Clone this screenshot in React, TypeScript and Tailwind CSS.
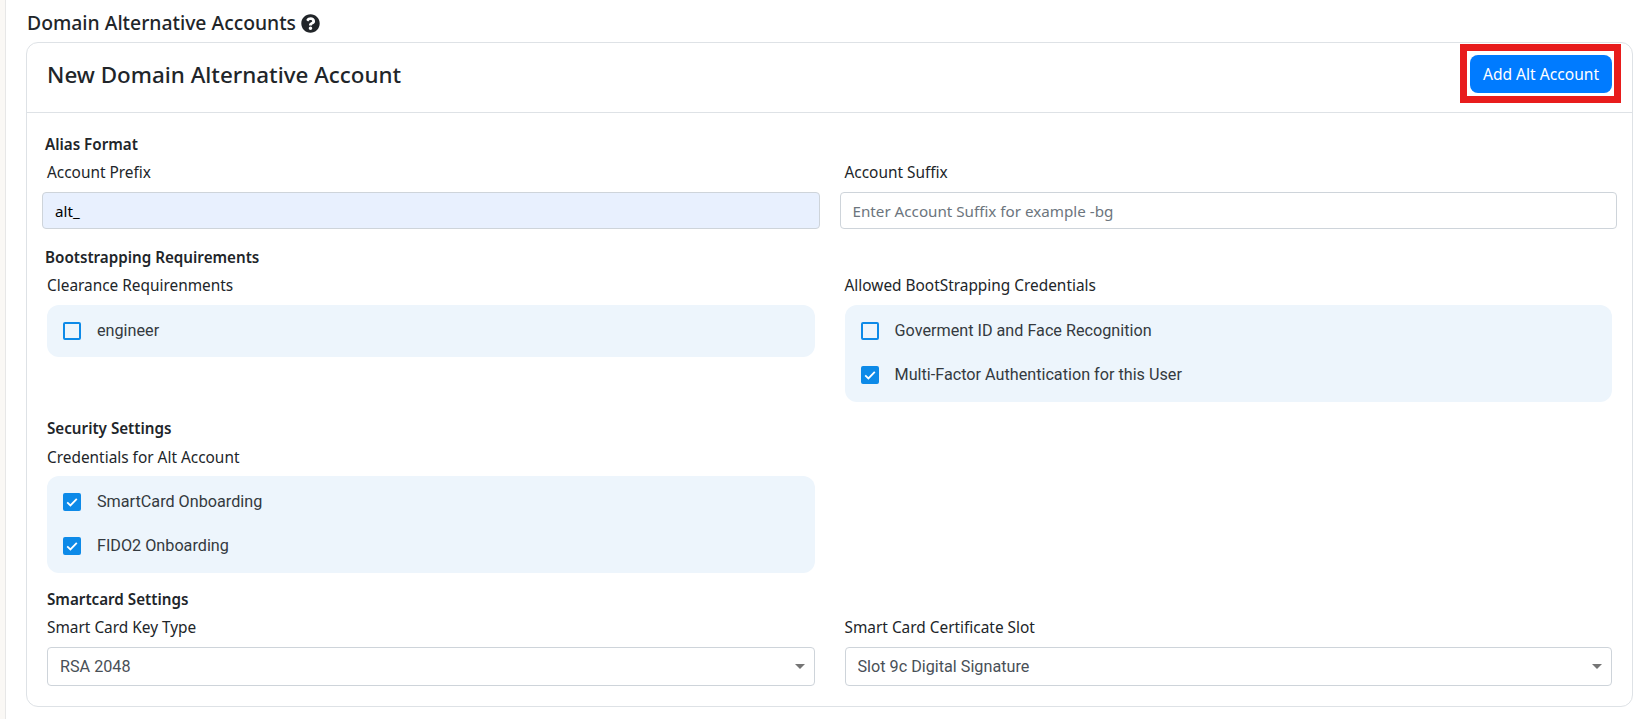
import React from 'react';
import { FaQuestionCircle } from 'react-icons/fa';

const Check = ({ checked }: { checked?: boolean }) => (
  <span
    className={
      'flex h-[18px] w-[18px] shrink-0 items-center justify-center rounded-[2px] border-2 border-[#0d8ae8] ' +
      (checked ? 'bg-[#0d8ae8]' : 'bg-transparent')
    }
  >
    {checked && (
      <svg width="14" height="14" viewBox="0 0 14 14" fill="none">
        <path d="M2.2 7.4 5.4 10.4 11.8 3.8" stroke="#fff" strokeWidth="1.8" />
      </svg>
    )}
  </span>
);

const CheckRow = ({ label, checked }: { label: string; checked?: boolean }) => (
  <div className="flex h-[18px] items-center gap-[16px]">
    <Check checked={checked} />
    <span className="font-['Roboto',sans-serif] text-[16.2px] text-[#343a40]">{label}</span>
  </div>
);

const CheckBox = ({ items }: { items: { label: string; checked?: boolean }[] }) => (
  <div className="flex flex-col gap-[26px] rounded-[12px] bg-[#edf5fc] px-[16px] pb-[17px] pt-[17px] [&:has(>:nth-child(2))]:pb-[18px]">
    {items.map((i) => (
      <CheckRow key={i.label} label={i.label} checked={i.checked} />
    ))}
  </div>
);

const SectionTitle = ({ children, className = '' }: { children: React.ReactNode; className?: string }) => (
  <div className={'h-5 text-[15.2px] leading-5 font-semibold text-[#212529] ' + className}>{children}</div>
);

const Label = ({ children, className = '' }: { children: React.ReactNode; className?: string }) => (
  <div className={'h-5 pt-px text-[15.4px] leading-5 text-[#212529] ' + className}>{children}</div>
);

const Select = ({ value }: { value: string }) => (
  <div className="relative mt-[10px] h-[39px]">
    <select
      defaultValue={value}
      className="h-full w-full appearance-none rounded-[4px] border border-[#ced4da] bg-white pl-[12px] pt-[2px] font-['Roboto',sans-serif] text-[16.2px] text-[#495057]"
    >
      <option>{value}</option>
    </select>
    <span className="pointer-events-none absolute right-[10px] top-[17px] h-0 w-0 border-x-[5px] border-t-[5px] border-x-transparent border-t-[#757575]" />
  </div>
);

export default function App() {
  return (
    <div className="flex min-h-[719px] bg-white font-['Noto_Sans',sans-serif] text-[#212529]">
      <div className="w-[6px] shrink-0 border-r border-[#e7e7e7] bg-[#faf8f5]" />
      <div className="flex-1 pl-[20px] pr-[14px]">
        <div className="flex h-[42px] items-center gap-[5px] pl-px pt-[4px]">
          <span className="text-[19.35px] font-medium leading-none">Domain Alternative Accounts</span>
          <FaQuestionCircle className="h-[19px] w-[19px]" />
        </div>

        <div className="rounded-[12px] border border-[#dee2e6] bg-white">
          <div className="flex h-[70px] items-center justify-between border-b border-[#dee2e6] pb-[7px] pl-[20px] pr-[20px]">
            <h2 className="mt-[2px] text-[22.4px] font-medium text-[#212529]">New Domain Alternative Account</h2>
            <div className="relative">
              <button className="h-[38px] w-[142px] rounded-[8px] bg-[#007bff] pt-[2px] text-[15.6px] text-white">
                Add Alt Account
              </button>
              {/* red highlight added on top of the screenshot */}
              <div className="pointer-events-none absolute -left-[10px] -right-[9px] -top-[11px] -bottom-[10px] border-[7px] border-[#e81c1c]" />
            </div>
          </div>

          <div className="pb-[20px] pt-[21px]">
            <SectionTitle className="pl-[18px]">Alias Format</SectionTitle>
            <div className="mt-[8px] grid grid-cols-2 gap-x-[20px] px-[15px]">
              <div>
                <Label className="pl-[5px]">Account Prefix</Label>
                <input
                  readOnly
                  value="alt_"
                  className="mt-[10px] h-[37px] w-full rounded-[4px] border border-[#ced4da] bg-[#e8f0fe] px-[12px] text-[15.2px] text-black"
                />
              </div>
              <div>
                <Label className="pl-[5px]">Account Suffix</Label>
                <input
                  readOnly
                  placeholder="Enter Account Suffix for example -bg"
                  className="mt-[10px] h-[37px] w-full rounded-[4px] border border-[#ced4da] bg-white px-[12px] text-[15.2px] placeholder:text-[#6c757d]"
                />
              </div>
            </div>

            <SectionTitle className="mt-[18px] pl-[18px]">Bootstrapping Requirements</SectionTitle>
            <div className="mt-[8px] grid grid-cols-2 gap-x-[30px] px-[20px]">
              <div>
                <Label>Clearance Requirenments</Label>
                <div className="mt-[10px]">
                  <CheckBox items={[{ label: 'engineer' }]} />
                </div>
              </div>
              <div>
                <Label>Allowed BootStrapping Credentials</Label>
                <div className="mt-[10px]">
                  <CheckBox
                    items={[
                      { label: 'Goverment ID and Face Recognition' },
                      { label: 'Multi-Factor Authentication for this User', checked: true },
                    ]}
                  />
                </div>
              </div>
            </div>

            <SectionTitle className="mt-[16px] pl-[20px]">Security Settings</SectionTitle>
            <div className="mt-[9px] grid grid-cols-2 gap-x-[30px] px-[20px]">
              <div>
                <Label>Credentials for Alt Account</Label>
                <div className="mt-[9px]">
                  <CheckBox
                    items={[
                      { label: 'SmartCard Onboarding', checked: true },
                      { label: 'FIDO2 Onboarding', checked: true },
                    ]}
                  />
                </div>
              </div>
            </div>

            <SectionTitle className="mt-[16px] pl-[20px]">Smartcard Settings</SectionTitle>
            <div className="mt-[8px] grid grid-cols-2 gap-x-[30px] px-[20px]">
              <div>
                <Label>Smart Card Key Type</Label>
                <Select value="RSA 2048" />
              </div>
              <div>
                <Label>Smart Card Certificate Slot</Label>
                <Select value="Slot 9c Digital Signature" />
              </div>
            </div>
          </div>
        </div>
      </div>
    </div>
  );
}
